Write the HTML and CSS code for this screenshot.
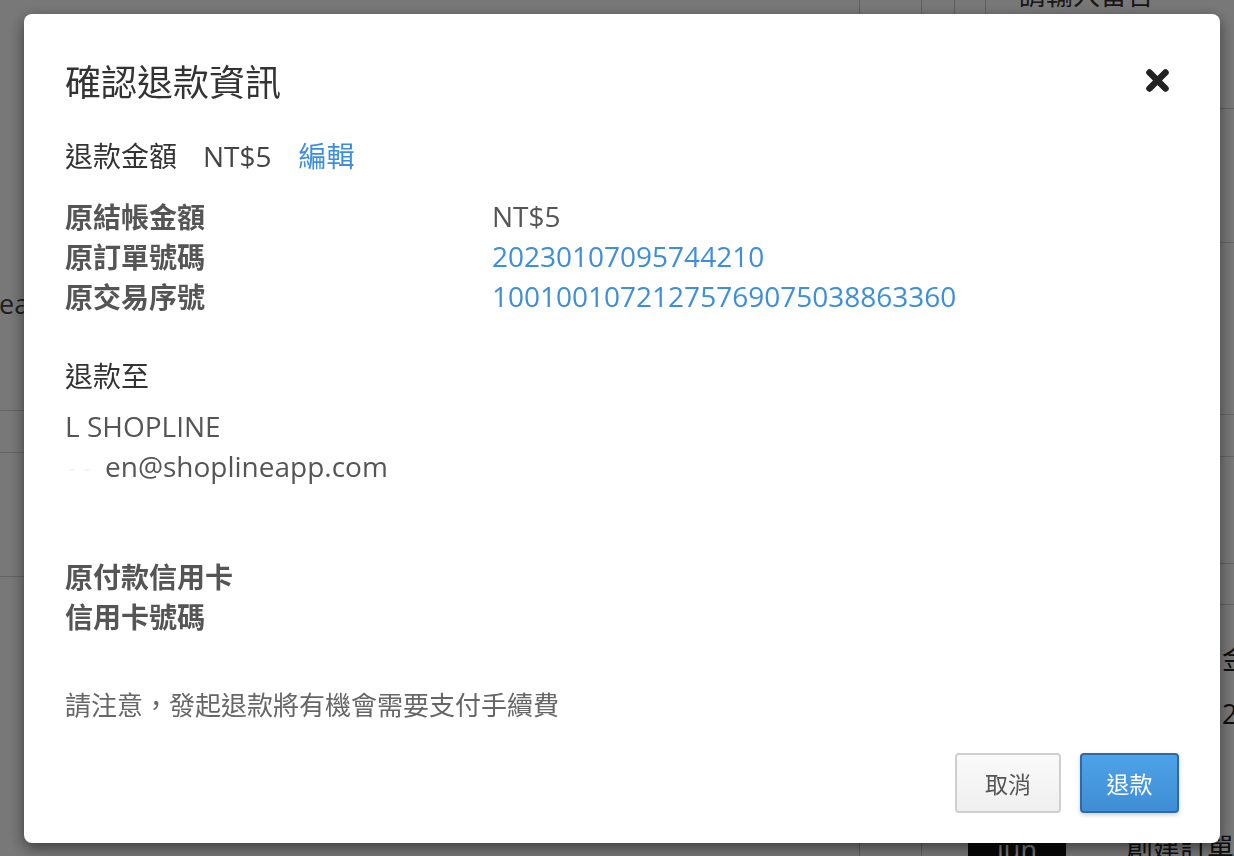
FILE: index.html
```html
<!DOCTYPE html>
<html lang="zh-Hant">
<head>
<meta charset="utf-8">
<title>確認退款資訊</title>
<link rel="stylesheet" href="styles.css">
</head>
<body>
  <div class="page">
    <section class="main">
      <div class="main-row row-search"><span class="search-text">ea</span></div>
      <div class="main-row row-a"></div>
      <div class="main-row row-b"></div>
      <div class="main-row row-rest"></div>
    </section>
    <div class="gutter"></div>
    <aside class="side">
      <div class="side-top">
        <div class="side-cell"></div>
        <div class="side-cell"></div>
        <div class="side-input">請輸入留言</div>
      </div>
      <div class="side-row h134"></div>
      <div class="side-row h172"></div>
      <div class="side-row h42"></div>
      <div class="side-row h107"></div>
      <div class="side-row h41"></div>
      <div class="side-summary">
        <div class="summary-label">金額</div>
        <div class="summary-value">2</div>
      </div>
      <div class="side-bottom">
        <span class="dark-btn">jun</span>
        <span class="create-text">創建訂單</span>
      </div>
    </aside>
  </div>

  <div class="backdrop"></div>

  <div class="modal" role="dialog" aria-labelledby="modal-title">
    <header class="modal-header">
      <h2 id="modal-title" class="modal-title">確認退款資訊</h2>
      <button class="close" type="button" aria-label="關閉">
        <svg width="25" height="25" viewBox="0 0 25 25" aria-hidden="true">
          <path d="M4.5 4.5 L20.5 20.5 M20.5 4.5 L4.5 20.5" stroke="#222" stroke-width="6.5" stroke-linecap="round"/>
        </svg>
      </button>
    </header>

    <div class="modal-body">
      <p class="amount-line">
        <span class="amount-label">退款金額</span>
        <span class="amount-value">NT$5</span>
        <a class="link" href="#">編輯</a>
      </p>

      <dl class="info-grid">
        <dt>原結帳金額</dt><dd>NT$5</dd>
        <dt>原訂單號碼</dt><dd class="link">20230107095744210</dd>
        <dt>原交易序號</dt><dd class="link">10010010721275769075038863360</dd>
      </dl>

      <p class="section-title">退款至</p>
      <div class="recipient">
        <p>L SHOPLINE</p>
        <p><span class="masked"></span>en@shoplineapp.com</p>
      </div>

      <dl class="card-info">
        <dt>原付款信用卡</dt>
        <dt>信用卡號碼</dt>
      </dl>

      <p class="note">請注意，發起退款將有機會需要支付手續費</p>
    </div>

    <footer class="modal-footer">
      <button class="btn btn-default" type="button">取消</button>
      <button class="btn btn-primary" type="button">退款</button>
    </footer>
  </div>
</body>
</html>
```
FILE: styles.css
```css
* {
  box-sizing: border-box;
}

html, body {
  margin: 0;
  padding: 0;
  height: 100%;
  overflow: hidden;
}

body {
  font-family: "Open Sans", "Noto Sans CJK TC", sans-serif;
  background: #fff;
  color: #333;
}

/* ---------- underlying page ---------- */
.page {
  display: grid;
  grid-template-columns: 860px 62px 1fr;
  height: 856px;
}

.main {
  display: flex;
  flex-direction: column;
  border-right: 1px solid #c8c8c8;
}

.main-row {
  border-bottom: 1px solid #d6d6d6;
}

.row-search {
  height: 411px;
  display: flex;
  align-items: flex-end;
  padding-bottom: 88px;
}

.search-text {
  font-size: 27px;
  color: #444;
  margin-left: -1px;
}

.row-a { height: 42px; }
.row-b { height: 124px; }
.row-rest { flex: 1; border-bottom: 0; }

.gutter {
  border-right: 1px solid #c8c8c8;
}

.side {
  display: flex;
  flex-direction: column;
  min-width: 0;
}

.side-top {
  display: flex;
  height: 109px;
  border-bottom: 1px solid #d6d6d6;
}

.side-cell {
  width: 33px;
  border-right: 1px solid #c8c8c8;
}

.side-cell + .side-cell {
  width: 31px;
}

.side-input {
  padding-left: 33px;
  margin-top: -21px;
  font-size: 27px;
  line-height: 30px;
  color: #333;
  white-space: nowrap;
  font-family: "Noto Sans CJK TC", sans-serif;
}

.side-row {
  border-bottom: 1px solid #d6d6d6;
}

.h134 { height: 134px; }
.h172 { height: 172px; }
.h42 { height: 42px; }
.h107 { height: 107px; }
.h41 { height: 41px; }

.side-summary {
  padding-left: 300px;
  padding-top: 34px;
  font-size: 27px;
  line-height: 40px;
  color: #222;
  height: 230px;
  white-space: nowrap;
}

.summary-value {
  margin-top: 15px;
}

.side-bottom {
  display: flex;
  align-items: flex-start;
  padding-left: 46px;
  gap: 60px;
  white-space: nowrap;
}

.dark-btn {
  width: 100px;
  height: 40px;
  background: #111;
  color: #fff;
  font-size: 27px;
  text-align: center;
  border-radius: 3px;
  margin-top: -4px;
}

.create-text {
  font-size: 27px;
  color: #222;
  margin-top: -8px;
  font-family: "Noto Sans CJK TC", sans-serif;
}

.backdrop {
  position: fixed;
  inset: 0;
  background: rgba(0, 0, 0, 0.53);
}

/* ---------- modal ---------- */
.modal {
  position: fixed;
  top: 14px;
  left: 24px;
  width: 1196px;
  height: 829px;
  background: #fff;
  border-radius: 8px;
  box-shadow: 0 5px 15px rgba(0, 0, 0, 0.5);
  padding: 0 41px;
  display: flex;
  flex-direction: column;
}

.modal-header {
  display: flex;
  align-items: center;
  justify-content: space-between;
  padding-top: 42px;
}

.modal-title {
  margin: 0;
  font-family: "Noto Sans CJK TC", sans-serif;
  font-weight: 400;
  font-size: 36px;
  line-height: 48px;
  color: #333;
}

.close {
  border: 0;
  background: none;
  padding: 0;
  margin-right: 9px;
  width: 25px;
  height: 25px;
  display: flex;
  cursor: pointer;
}

.modal-body {
  font-size: 28px;
  line-height: 40px;
}

.modal-body p {
  margin: 0;
}

.amount-line {
  margin-top: 32px !important;
  display: flex;
  color: #333;
}

.amount-label {
  margin-right: 26px;
}

.amount-value {
  margin-right: 27px;
  color: #444;
}

.link {
  color: #3d8edb;
  text-decoration: none;
}

.info-grid {
  display: grid;
  grid-template-columns: 427px auto;
  margin: 20px 0 0;
}

.info-grid dt,
.card-info dt {
  font-weight: 700;
  color: #555;
  font-family: "Noto Sans CJK TC", sans-serif;
}

.info-grid dd {
  margin: 0;
  color: #555;
}

.info-grid dd.link {
  color: #3d8edb;
}

.section-title {
  margin-top: 40px !important;
  color: #333;
}

.recipient {
  margin-top: 10px;
  color: #555;
}

.masked {
  display: inline-block;
  width: 40px;
  height: 2px;
  vertical-align: middle;
  background: linear-gradient(to right, transparent 10%, #f2f2f2 12%, #f2f2f2 22%, transparent 24%, transparent 48%, #f2f2f2 50%, #f2f2f2 60%, transparent 62%);
}

.card-info {
  margin: 70px 0 0;
}

.note {
  margin-top: 51px !important;
  font-size: 26px;
  line-height: 34px;
  color: #666;
  font-family: "Noto Sans CJK TC", sans-serif;
}

.modal-footer {
  display: flex;
  justify-content: flex-end;
  gap: 19px;
  margin-top: 32px;
}

.btn {
  height: 60px;
  border-radius: 4px;
  font-family: "Noto Sans CJK TC", sans-serif;
  font-size: 23px;
  padding: 0;
  cursor: pointer;
}

.btn-default {
  width: 106px;
  color: #555;
  background: linear-gradient(#fafafa, #efefef);
  border: 2px solid #cfcfcf;
}

.btn-primary {
  width: 99px;
  color: #fff;
  background: linear-gradient(#4ea3e8, #3f8dd5);
  border: 2px solid #2f6aa3;
  box-shadow: 0 2px 4px rgba(0, 0, 0, 0.2);
}
```
